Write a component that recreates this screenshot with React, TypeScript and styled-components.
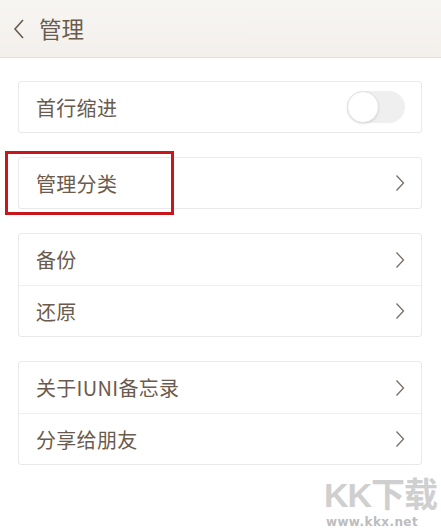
import styled, { createGlobalStyle } from 'styled-components';

const GlobalStyle = createGlobalStyle`
  html, body {
    margin: 0;
    padding: 0;
    background: #ffffff;
  }
  body {
    font-family: "Noto Sans CJK SC", "Noto Sans", sans-serif;
    color: #6b5b4e;
  }
`;

const Page = styled.div`
  position: relative;
  width: 441px;
  height: 531px;
  overflow: hidden;
  background: #fff;
`;

const Header = styled.header`
  height: 57px;
  display: flex;
  align-items: center;
  padding-left: 12px;
  gap: 13px;
  background: linear-gradient(#f7f5f2, #f3f0ec);
  border-bottom: 1px solid #e4e0dc;
`;

const Title = styled.h1`
  margin: 0;
  font-size: 22.5px;
  font-weight: 400;
  color: #6b5b4e;
  line-height: 1;
`;

const Content = styled.main`
  display: flex;
  flex-direction: column;
  gap: 24px;
  padding: 23px 19px 0 18px;
`;

const Card = styled.section`
  position: relative;
  border: 1px solid #ebe9e7;
  border-radius: 3px;
  background: #fff;
`;

const Row = styled.div`
  box-sizing: border-box;
  height: 50px;
  display: flex;
  align-items: center;
  justify-content: space-between;
  padding: 0 16px 0 17px;
`;

const GroupRow = styled(Row)`
  height: 51px;
  & + & {
    border-top: 1px solid #f0eeec;
  }
`;

const Label = styled.span`
  font-size: 20px;
  color: #6b5b4e;
  letter-spacing: 0.3px;
`;

const Track = styled.div`
  width: 58px;
  height: 32px;
  border-radius: 16px;
  background: #efefef;
  position: relative;
`;

const Knob = styled.div`
  position: absolute;
  left: 0;
  top: 0;
  width: 32px;
  height: 32px;
  border-radius: 50%;
  background: #fff;
  box-sizing: border-box;
  border: 1px solid #e2e2e2;
  box-shadow: 0 1px 2px rgba(0, 0, 0, 0.12);
`;

const Highlight = styled.div`
  position: absolute;
  left: -14px;
  top: -7px;
  width: 163px;
  height: 58px;
  border: 3px solid #c8161d;
`;

const Watermark = styled.div`
  position: absolute;
  right: 4px;
  bottom: 2px;
  display: flex;
  flex-direction: column;
  align-items: flex-start;
  color: #c9c9c9;
`;

const MarkLogo = styled.span`
  font-family: "Liberation Sans", "Noto Sans CJK SC", sans-serif;
  font-size: 34px;
  font-weight: 700;
  line-height: 36px;
  color: #cfcfcf;
  letter-spacing: -1px;
`;

const MarkUrl = styled.span`
  font-family: "DejaVu Sans", sans-serif;
  font-size: 12px;
  font-weight: 700;
  letter-spacing: 0.4px;
  color: #bdbdbd;
  margin: 2px 0 0 2px;
`;

const Back = () => (
  <svg width="14" height="22" viewBox="0 0 14 22">
    <path d="M11 2 L3 11 L11 20" fill="none" stroke="#6b5b4e" strokeWidth="1.6" />
  </svg>
);

const Chevron = () => (
  <svg width="10" height="18" viewBox="0 0 10 18">
    <path d="M1.5 1.5 L8.5 9 L1.5 16.5" fill="none" stroke="#7a6e66" strokeWidth="1.3" />
  </svg>
);

const groups = [
  ['备份', '还原'],
  ['关于IUNI备忘录', '分享给朋友'],
];

export default function App() {
  return (
    <Page>
      <GlobalStyle />
      <Header>
        <Back />
        <Title>管理</Title>
      </Header>
      <Content>
        <Card>
          <Row>
            <Label>首行缩进</Label>
            <Track>
              <Knob />
            </Track>
          </Row>
        </Card>
        <Card>
          <Highlight />
          <Row>
            <Label>管理分类</Label>
            <Chevron />
          </Row>
        </Card>
        {groups.map((items) => (
          <Card key={items[0]}>
            {items.map((label) => (
              <GroupRow key={label}>
                <Label>{label}</Label>
                <Chevron />
              </GroupRow>
            ))}
          </Card>
        ))}
      </Content>
      <Watermark>
        <MarkLogo>KK下载</MarkLogo>
        <MarkUrl>www.kkx.net</MarkUrl>
      </Watermark>
    </Page>
  );
}
